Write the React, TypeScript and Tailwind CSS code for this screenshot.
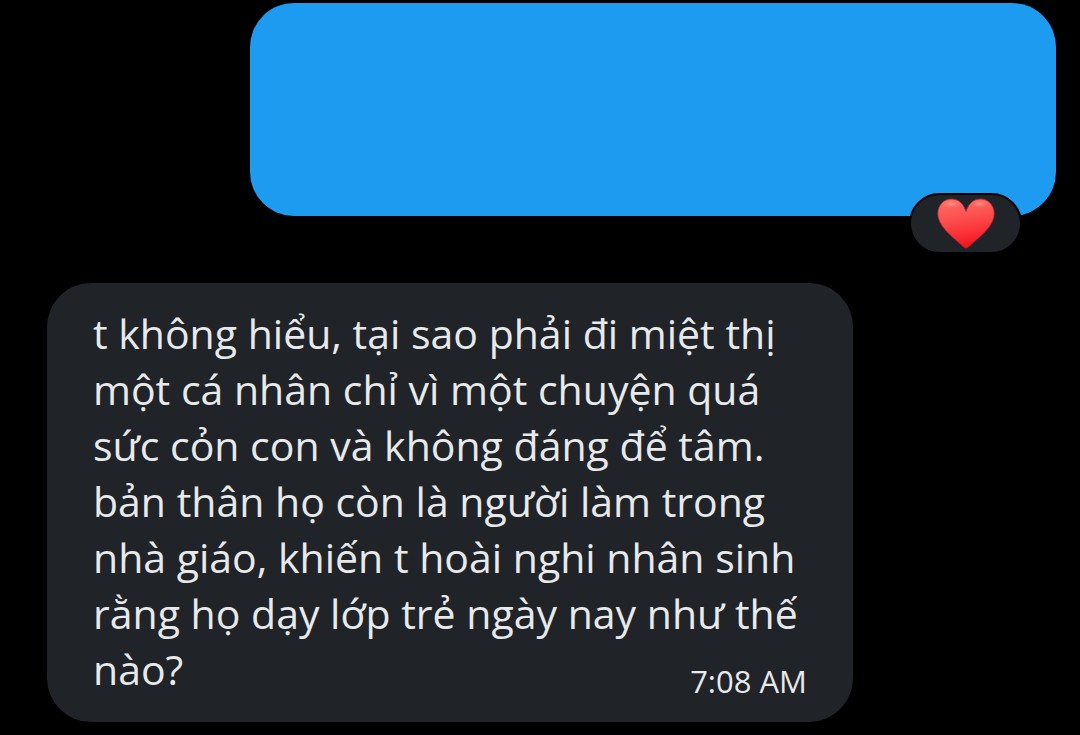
import React from 'react';

interface Message {
  lines: string[];
  time: string;
}

const reply: Message = {
  lines: [
    't không hiểu, tại sao phải đi miệt thị',
    'một cá nhân chỉ vì một chuyện quá',
    'sức cỏn con và không đáng để tâm.',
    'bản thân họ còn là người làm trong',
    'nhà giáo, khiến t hoài nghi nhân sinh',
    'rằng họ dạy lớp trẻ ngày nay như thế',
    'nào?',
  ],
  time: '7:08 AM',
};

const HeartIcon: React.FC = () => (
  <svg viewBox="0 0 58 51" className="h-[51px] w-[58px]" aria-hidden="true">
    <defs>
      <linearGradient id="heartFill" x1="0.4" y1="0" x2="0.6" y2="1">
        <stop offset="0" stopColor="#ff6a64" />
        <stop offset="0.35" stopColor="#fc5250" />
        <stop offset="0.7" stopColor="#fb3036" />
        <stop offset="1" stopColor="#f0101c" />
      </linearGradient>
      <radialGradient id="heartShine" cx="0.5" cy="0.5" r="0.5">
        <stop offset="0" stopColor="#ffaaa0" stopOpacity="0.6" />
        <stop offset="1" stopColor="#ff8880" stopOpacity="0" />
      </radialGradient>
    </defs>
    <path
      d="M29 50C27.5 50 26 48.5 24 46.5C17 40.500 8 33 4 26C2 22.500 0.800 19 0.800 15.500C0.800 7 7 1 14.500 1C21.500 1 26.500 5.500 29 13.500C31.500 5.500 36.500 1 43.500 1C51 1 57.200 7 57.200 15.500C57.200 19 56 22.500 54 26C50 33 41 40.500 34 46.500C32 48.500 30.500 50 29 50Z"
      fill="url(#heartFill)"
      stroke="#b3262b"
      strokeWidth="0.8"
    />
    <ellipse cx="14" cy="6" rx="10" ry="4" fill="url(#heartShine)" />
    <ellipse cx="43" cy="6" rx="10" ry="4" fill="url(#heartShine)" />
  </svg>
);

const SentBubble: React.FC = () => (
  <div className="relative ml-auto h-[213px] w-4/5 max-w-[806px] rounded-[44px] bg-[#1d9bf0]">
    <button
      aria-label="Reactions"
      className="absolute right-[34px] -bottom-[38px] flex h-[61px] w-[113px] items-center justify-center rounded-full border-2 border-black bg-[#202327]"
    >
      <HeartIcon />
    </button>
  </div>
);

const ReceivedBubble: React.FC<{ message: Message }> = ({ message }) => {
  const last = message.lines.length - 1;

  return (
    <div className="w-4/5 max-w-[806px] rounded-[44px] bg-[#202327] px-[46px] pt-[22px] pb-[25px] text-[41px] leading-[56px] whitespace-nowrap text-[#e7e9ea]">
      {message.lines.slice(0, last).map(line => (
        <p key={line}>{line}</p>
      ))}
      <div className="flex items-end justify-between">
        <p>{message.lines[last]}</p>
        <time className="text-[31px] leading-8">{message.time}</time>
      </div>
    </div>
  );
};

export default function App() {
  return (
    <main className="flex min-h-screen flex-col gap-[67px] bg-black pt-[3px] pr-6 pb-3 pl-[47px] font-['Open_Sans',sans-serif]">
      <SentBubble />
      <ReceivedBubble message={reply} />
    </main>
  );
}
